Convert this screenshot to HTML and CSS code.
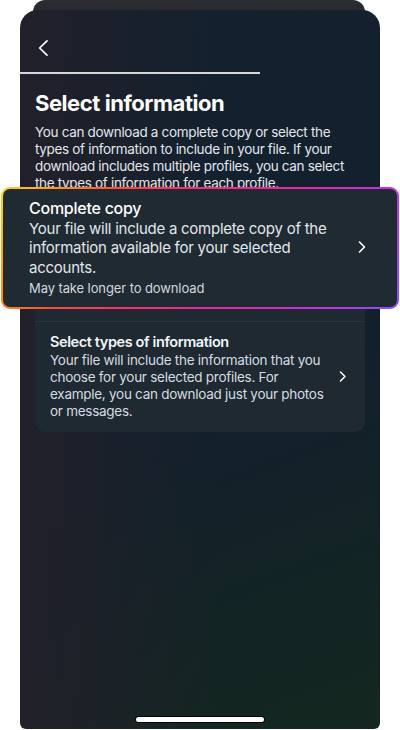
FILE: index.html
```html
<!DOCTYPE html>
<html lang="en">
<head>
<meta charset="utf-8">
<title>Select information</title>
<link rel="stylesheet" href="styles.css">
</head>
<body>
<div class="screen">
  <div class="back-card"></div>
  <div class="phone">
    <div class="topbar">
      <svg class="back-icon" width="12" height="18" viewBox="0 0 12 18" aria-hidden="true"><path d="M10 1.8 L2.6 9 L10 16.2" fill="none" stroke="#ffffff" stroke-width="1.7" stroke-linecap="round" stroke-linejoin="round"/></svg>
    </div>
    <div class="progress"></div>
    <main class="content">
      <h1 class="title">Select information</h1>
      <p class="intro">You can download a complete copy or select the<br>types of information to include in your file. If your<br>download includes multiple profiles, you can select<br>the types of information for each profile.</p>
      <div class="list">
        <div class="row row-first"></div>
        <div class="row">
          <div class="row-text">
            <div class="row-title">Select types of information</div>
            <div class="row-desc">Your file will include the information that you<br>choose for your selected profiles. For<br>example, you can download just your photos<br>or messages.</div>
          </div>
          <svg class="chev" width="8" height="11" viewBox="0 0 8 11" aria-hidden="true"><path d="M1.5 1 L6 5.5 L1.5 10" fill="none" stroke="#ffffff" stroke-width="1.5" stroke-linecap="round" stroke-linejoin="round"/></svg>
        </div>
      </div>
    </main>
    <div class="home"></div>
    <div class="spotlight">
      <div class="spot-text">
        <div class="spot-title">Complete copy</div>
        <div class="spot-desc">Your file will include a complete copy of the<br>information available for your selected<br>accounts.</div>
        <div class="spot-note">May take longer to download</div>
      </div>
      <svg class="spot-chev" width="8" height="12" viewBox="0 0 8 12" aria-hidden="true"><path d="M1.5 1 L6.5 6 L1.5 11" fill="none" stroke="#ffffff" stroke-width="1.6" stroke-linecap="round" stroke-linejoin="round"/></svg>
    </div>
  </div>
</div>
</body>
</html>
```

FILE: styles.css
```css
* { box-sizing: border-box; }

html, body {
  margin: 0;
  padding: 0;
  background: #ffffff;
}

body {
  font-family: Inter, "Noto Sans", Roboto, sans-serif;
  color: #e4e7eb;
}

.screen {
  width: 400px;
  height: 730px;
  overflow: hidden;
}

.back-card {
  height: 14px;
  margin: 0 35px -4px 33px;
  background: linear-gradient(to bottom, #2d2e32, #26272c);
  border-radius: 12px 12px 0 0;
}

.phone {
  position: relative;
  height: 719px;
  margin: 0 20px;
  border-radius: 18px 18px 6px 6px;
  display: flex;
  flex-direction: column;
  background:
    linear-gradient(to right, rgba(34, 32, 42, 0.95) 0%, rgba(34, 32, 42, 0) 55%),
    linear-gradient(160deg, #14212f 0%, #12202c 55%, #14271f 100%);
}

.topbar {
  height: 62px;
  padding: 14px 0 0 17px;
  display: flex;
  align-items: center;
}

.back-icon { display: block; }

.progress {
  width: 240px;
  height: 1.5px;
  background: #d6d7d9;
}

.content {
  padding: 0 15px;
}

.title {
  margin: 15.5px 0 0;
  font-size: 22px;
  line-height: 28px;
  font-weight: 700;
  letter-spacing: -0.45px;
  color: #ffffff;
}

.intro {
  margin: 7px 0 0;
  font-size: 13.5px;
  line-height: 17px;
  letter-spacing: -0.33px;
  color: #e3e6ea;
  white-space: nowrap;
}

.list {
  margin-top: 8px;
  background: #1e2932;
  border-radius: 10px;
}

.row {
  display: flex;
  align-items: center;
  padding: 10px 18px 12px 15px;
}

.row-first {
  height: 122px;
  border-bottom: 1px solid #29343d;
}

.row-text {
  flex: 1;
  min-width: 0;
  white-space: nowrap;
}

.row-title {
  font-size: 14.5px;
  line-height: 20px;
  font-weight: 600;
  letter-spacing: -0.4px;
  color: #f3f5f7;
}

.row-desc {
  font-size: 13.5px;
  line-height: 17px;
  letter-spacing: -0.27px;
  color: #d6dbe0;
}

.chev, .spot-chev { display: block; flex: none; }

.home {
  width: 128px;
  height: 5px;
  margin: auto auto 7px;
  background: #ffffff;
  border-radius: 3px;
  box-shadow: 0 0 0 1px #050608;
}

.spotlight {
  position: absolute;
  left: -19px;
  top: 177px;
  width: 398px;
  height: 122px;
  border: 2px solid transparent;
  border-radius: 9px;
  padding: 7px 31px 9px 26px;
  display: flex;
  align-items: center;
  background:
    linear-gradient(#1f2a33, #1f2a33) padding-box,
    linear-gradient(120deg, #ffd21f 0%, #ff8a1f 14%, #ff4a3a 25%, #ff2d6b 40%, #e8289a 58%, #d22bd0 78%, #8b4df5 100%) border-box;
}

.spot-text {
  flex: 1;
  min-width: 0;
  white-space: nowrap;
}

.spot-title {
  font-size: 16px;
  line-height: 22px;
  font-weight: 500;
  letter-spacing: -0.25px;
  color: #ffffff;
}

.spot-desc {
  font-size: 15px;
  line-height: 19.5px;
  letter-spacing: -0.25px;
  color: #e2e6ea;
}

.spot-note {
  margin-top: 2px;
  font-size: 13px;
  line-height: 18px;
  letter-spacing: -0.1px;
  color: #d3d8dd;
}
```
